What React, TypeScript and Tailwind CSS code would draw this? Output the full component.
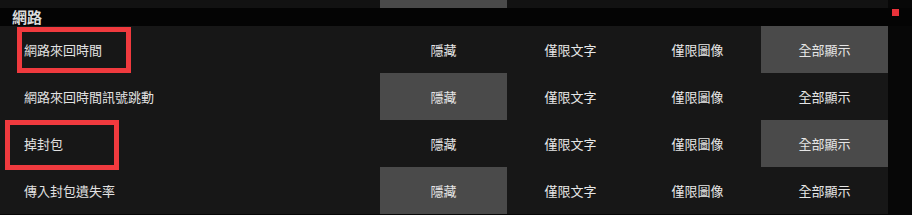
const options = ["隱藏", "僅限文字", "僅限圖像", "全部顯示"];

const rows = [
  { label: "網路來回時間", selected: 3 },
  { label: "網路來回時間訊號跳動", selected: 0 },
  { label: "掉封包", selected: 3 },
  { label: "傳入封包遺失率", selected: 0 },
];

function Row({ label, selected }: { label: string; selected: number }) {
  return (
    <div className="flex h-[47px] bg-[#171717]">
      <div className="w-[380px] flex items-center pl-[24px] text-[13px] text-[#e2e2e2]">
        {label}
      </div>
      {options.map((o, i) => (
        <div
          key={o}
          className={`w-[127px] flex items-center justify-center text-[13px] text-[#e6e6e6] ${
            i === selected ? "bg-[#4a4a4a]" : ""
          }`}
        >
          {o}
        </div>
      ))}
      <div className="flex-1 bg-[#070707]" />
    </div>
  );
}

export default function App() {
  return (
    <div
      className="relative w-[912px] h-[215px] overflow-hidden bg-[#070707]"
      style={{ fontFamily: '"Noto Sans CJK TC", "Noto Sans", sans-serif' }}
    >
      {/* tail of the previous row */}
      <div className="flex h-[8px] bg-[#121212]">
        <div className="w-[380px]" />
        <div className="w-[127px] bg-[#4a4a4a]" />
        <div className="w-[381px]" />
        <div className="flex-1 bg-[#070707]" />
      </div>

      <div className="h-[18px] flex items-center pl-[12px] bg-[#040404] text-[15px] font-bold text-[#dcdcdc]">
        網路
      </div>

      {rows.map((r) => (
        <Row key={r.label} label={r.label} selected={r.selected} />
      ))}

      {/* annotations */}
      <div className="absolute left-[892px] top-[9px] w-[7px] h-[7px] bg-[#e8323a]" />
      <div className="absolute left-[17px] top-[27px] w-[114px] h-[46px] border-[5px] border-[#f03a3e]" />
      <div className="absolute left-[5px] top-[120px] w-[114px] h-[50px] border-[5px] border-[#f03a3e]" />
    </div>
  );
}
